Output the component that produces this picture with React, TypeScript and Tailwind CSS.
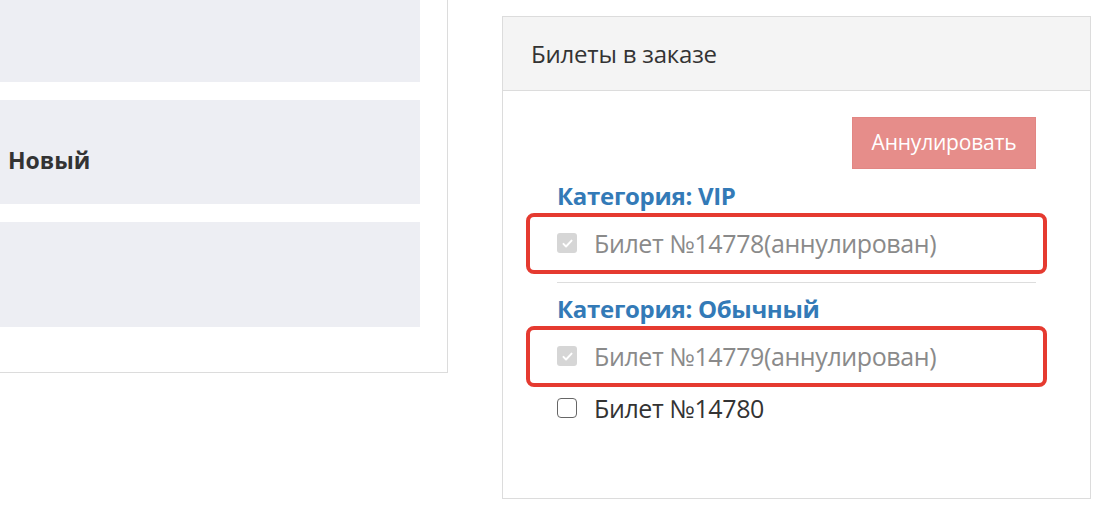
import React from "react";

const font = { fontFamily: "'Open Sans', 'Noto Sans', sans-serif" };

function Box({ checked }: { checked: boolean }) {
  if (checked) {
    return (
      <span className="flex h-[20px] w-[20px] shrink-0 items-center justify-center rounded-[3px] bg-[#d6d6d6]">
        <svg width="13" height="13" viewBox="0 0 16 16" fill="none">
          <path d="M3 8.5l3.2 3.2L13 4.5" stroke="#fff" strokeWidth="2.4" strokeLinecap="round" strokeLinejoin="round" />
        </svg>
      </span>
    );
  }
  return <span className="h-[20px] w-[20px] shrink-0 rounded-[4px] border-[1.5px] border-[#666] bg-white" />;
}

function Ticket({ num, cancelled, mark }: { num: string; cancelled?: boolean; mark?: boolean }) {
  return (
    <div className={"relative flex items-center gap-[17px] " + (mark ? "h-[66px]" : "h-[30px]")}>
      <Box checked={!!cancelled} />
      <span className={"text-[25px] leading-[30px] tracking-[-0.4px] " + (cancelled ? "text-[#8a8a8a]" : "text-[#333]")}>
        Билет №{num}
        {cancelled && "(аннулирован)"}
      </span>
      {mark && (
        <div className="absolute left-[-31px] right-[-11px] top-[3px] bottom-[2px] rounded-[8px] border-[4px] border-[#e53a30]" />
      )}
    </div>
  );
}

export default function App() {
  return (
    <div className="flex h-[520px] w-[1116px] overflow-hidden bg-white" style={font}>
      <div className="flex h-[373px] w-[448px] shrink-0 flex-col gap-[18px] border-r border-b border-[#dcdcdc]">
        <div className="mt-[-20px] h-[102px] w-[420px] bg-[#edeef3]" />
        <div className="flex h-[104px] w-[420px] items-center bg-[#edeef3] pl-[8px] pt-[16px]">
          <span className="text-[23px] font-bold text-[#333]">Новый</span>
        </div>
        <div className="h-[105px] w-[420px] bg-[#edeef3]" />
      </div>

      <div className="ml-[54px] mt-[16px] flex h-[483px] w-[589px] flex-col border border-[#dcdcdc]">
        <div className="flex h-[74px] items-center border-b border-[#dcdcdc] bg-[#f4f4f4] px-[28px]">
          <span className="text-[24px] tracking-[-0.2px] text-[#333]">Билеты в заказе</span>
        </div>
        <div className="flex flex-col px-[54px] pt-[26px]">
          <div className="flex justify-end">
            <button className="h-[52px] w-[184px] border border-[#e28683] bg-[#e68d8a] text-[21px] tracking-[-0.2px] text-white">
              Аннулировать
            </button>
          </div>
          <div className="mt-[13px] flex h-[28px] items-center text-[24px] font-bold tracking-[-0.3px] text-[#337ab7]">Категория: VIP</div>
          <Ticket num="14778" cancelled mark />
          <div className="mt-[6px] border-t border-[#dddddd]" />
          <div className="mt-[12px] flex h-[28px] items-center text-[24px] font-bold tracking-[-0.3px] text-[#337ab7]">Категория: Обычный</div>
          <Ticket num="14779" cancelled mark />
          <div className="mt-[4px]">
            <Ticket num="14780" />
          </div>
        </div>
      </div>
    </div>
  );
}
